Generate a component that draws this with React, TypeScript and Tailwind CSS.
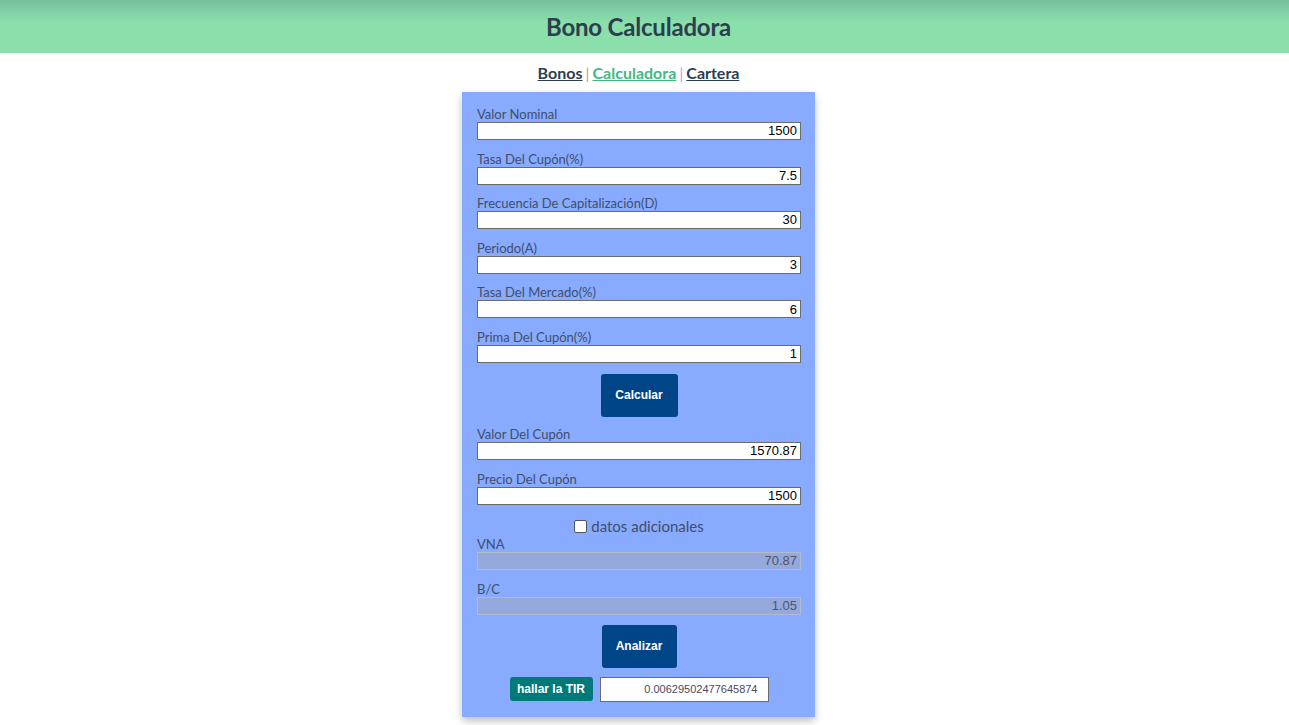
import React from "react";

const fields = [
  { label: "Valor Nominal", value: "1500" },
  { label: "Tasa Del Cupón(%)", value: "7.5" },
  { label: "Frecuencia De Capitalización(D)", value: "30" },
  { label: "Periodo(A)", value: "3" },
  { label: "Tasa Del Mercado(%)", value: "6" },
  { label: "Prima Del Cupón(%)", value: "1" },
];

const results = [
  { label: "Valor Del Cupón", value: "1570.87" },
  { label: "Precio Del Cupón", value: "1500" },
];

const extra = [
  { label: "VNA", value: "70.87" },
  { label: "B/C", value: "1.05" },
];

const Field: React.FC<{ label: string; value: string; disabled?: boolean }> = ({
  label,
  value,
  disabled,
}) => (
  <div className="flex flex-col">
    <label className="text-[13px] leading-[16px] pt-[1px] text-[#3f4f6a] font-['Lato',sans-serif]">
      {label}
    </label>
    <input
      readOnly
      value={value}
      className={`h-[18px] w-full border px-[3px] text-right text-[13px] font-['Liberation_Sans',Arial,sans-serif] outline-none ${
        disabled
          ? "bg-[#97a9dc] border-[#b3bccf] text-[#4d5566]"
          : "bg-white border-[#6b6b6b] text-black"
      }`}
    />
  </div>
);

const App: React.FC = () => {
  return (
    <div className="min-h-[725px] bg-white font-['Lato',sans-serif] text-[#2c3e50]">
      <header className="h-[53px] flex items-center justify-center pr-[12px] bg-[linear-gradient(to_bottom,#76bf9c_0px,#8adfab_22px,#8adfab_100%)]">
        <h1 className="text-[24px] font-bold text-[#2c3e50] tracking-[-0.2px]">Bono Calculadora</h1>
      </header>

      <div className="pr-[12px]">
        <nav className="mt-[10px] h-[20px] flex items-center justify-center text-[16px] font-bold leading-[20px]">
          <a className="underline text-[#2c3e50]">Bonos</a>
          <span className="mx-[3px] text-[#c9a27a] font-normal">|</span>
          <a className="underline text-[#42b983]">Calculadora</a>
          <span className="mx-[3px] text-[#8ab8e0] font-normal">|</span>
          <a className="underline text-[#2c3e50]">Cartera</a>
        </nav>

        <div className="flex justify-center mt-[9px]">
          <div className="w-[353px] bg-[#88aaff] pl-[15px] pr-[14px] pt-[13px] pb-[15px] shadow-[0_4px_8px_rgba(0,0,0,0.25)] flex flex-col">
            <div className="flex flex-col gap-[9.6px]">
              {fields.map((f) => (
                <Field key={f.label} label={f.label} value={f.value} />
              ))}
            </div>

            <div className="flex justify-center mt-[11px] mb-[8px]">
              <button className="w-[77px] h-[43px] rounded-[3px] bg-[#004587] text-white text-[12px] font-bold font-['Liberation_Sans',Arial,sans-serif]">
                Calcular
              </button>
            </div>

            <div className="flex flex-col gap-[9.6px]">
              {results.map((f) => (
                <Field key={f.label} label={f.label} value={f.value} />
              ))}
            </div>

            <div className="flex items-center justify-center mt-[13px] h-[18px] gap-[4px] text-[15px] text-[#3f4f6a]">
              <input type="checkbox" className="w-[13px] h-[13px] m-0 appearance-none bg-white border border-[#555] rounded-[2px]" />
              <span>datos adicionales</span>
            </div>

            <div className="flex flex-col gap-[10px] mt-[-1px]">
              {extra.map((f) => (
                <Field key={f.label} label={f.label} value={f.value} disabled />
              ))}
            </div>

            <div className="flex justify-center mt-[10px]">
              <button className="w-[75px] h-[43px] rounded-[3px] bg-[#004587] text-white text-[12px] font-bold font-['Liberation_Sans',Arial,sans-serif]">
                Analizar
              </button>
            </div>

            <div className="flex justify-center items-center gap-[7px] mt-[9px]">
              <button className="w-[83px] h-[24px] rounded-[3px] bg-[#007a78] text-white text-[12px] font-bold font-['Liberation_Sans',Arial,sans-serif]">
                hallar la TIR
              </button>
              <input
                readOnly
                value="0.00629502477645874"
                className="w-[169px] h-[25px] bg-white border border-[#6b6b6b] px-[10px] text-right text-[11px] text-[#4a4a5a] font-['Liberation_Sans',Arial,sans-serif] outline-none"
              />
            </div>
          </div>
        </div>
      </div>
    </div>
  );
};

export default App;
